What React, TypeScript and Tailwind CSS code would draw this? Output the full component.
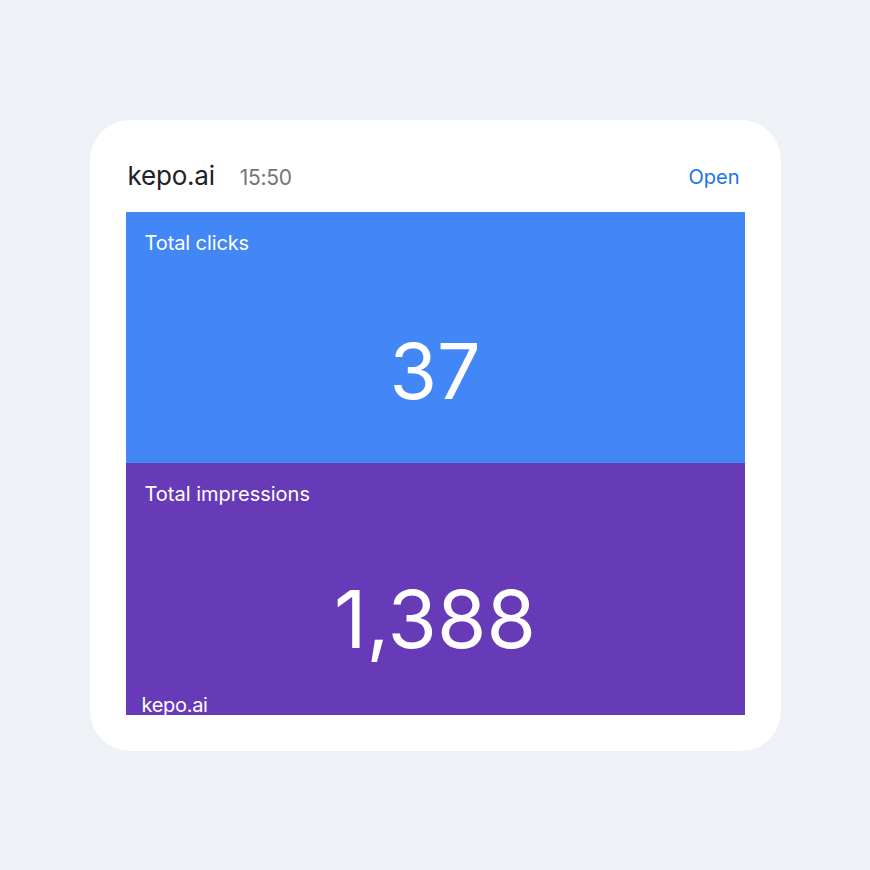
export default function App() {
  return (
    <div
      className="min-h-screen w-full bg-[#eef1f5] flex items-start justify-center pt-[120px]"
      style={{ fontFamily: "Inter, 'Noto Sans', sans-serif" }}
    >
      <div className="w-[691px] h-[631px] bg-white rounded-[40px] px-[36px] pb-[36px] flex flex-col">
        <div className="h-[92px] flex items-baseline pt-[38px] pl-[2px] pr-[5px]">
          <span className="text-[26px] leading-[36px] text-[#202124] tracking-[-0.2px]">kepo.ai</span>
          <span className="ml-[25px] text-[21px] text-[#757575] tracking-[-0.3px]">15:50</span>
          <span className="ml-auto text-[20px] text-[#1a73e8] relative top-[-1px]">Open</span>
        </div>

        <div className="flex-1 flex flex-col">
          <div className="h-[251px] bg-[#4287f5] flex flex-col px-[19px] pt-[17px] text-white">
            <div className="text-[20px] leading-[28px] tracking-[-0.1px]">Total clicks</div>
            <div className="mt-[76px] text-center text-[77px] leading-none">37</div>
          </div>
          <div className="relative flex-1 bg-[#673ab7] overflow-hidden flex flex-col px-[19px] pt-[17px] text-white">
            <div className="text-[20px] leading-[28px]">Total impressions</div>
            <div className="mt-[71px] text-center text-[80px] leading-none">1,388</div>
            <div className="absolute left-[16px] bottom-[-4px] text-[20px] leading-[28px] tracking-[-0.3px]">kepo.ai</div>
          </div>
        </div>
      </div>
    </div>
  );
}
